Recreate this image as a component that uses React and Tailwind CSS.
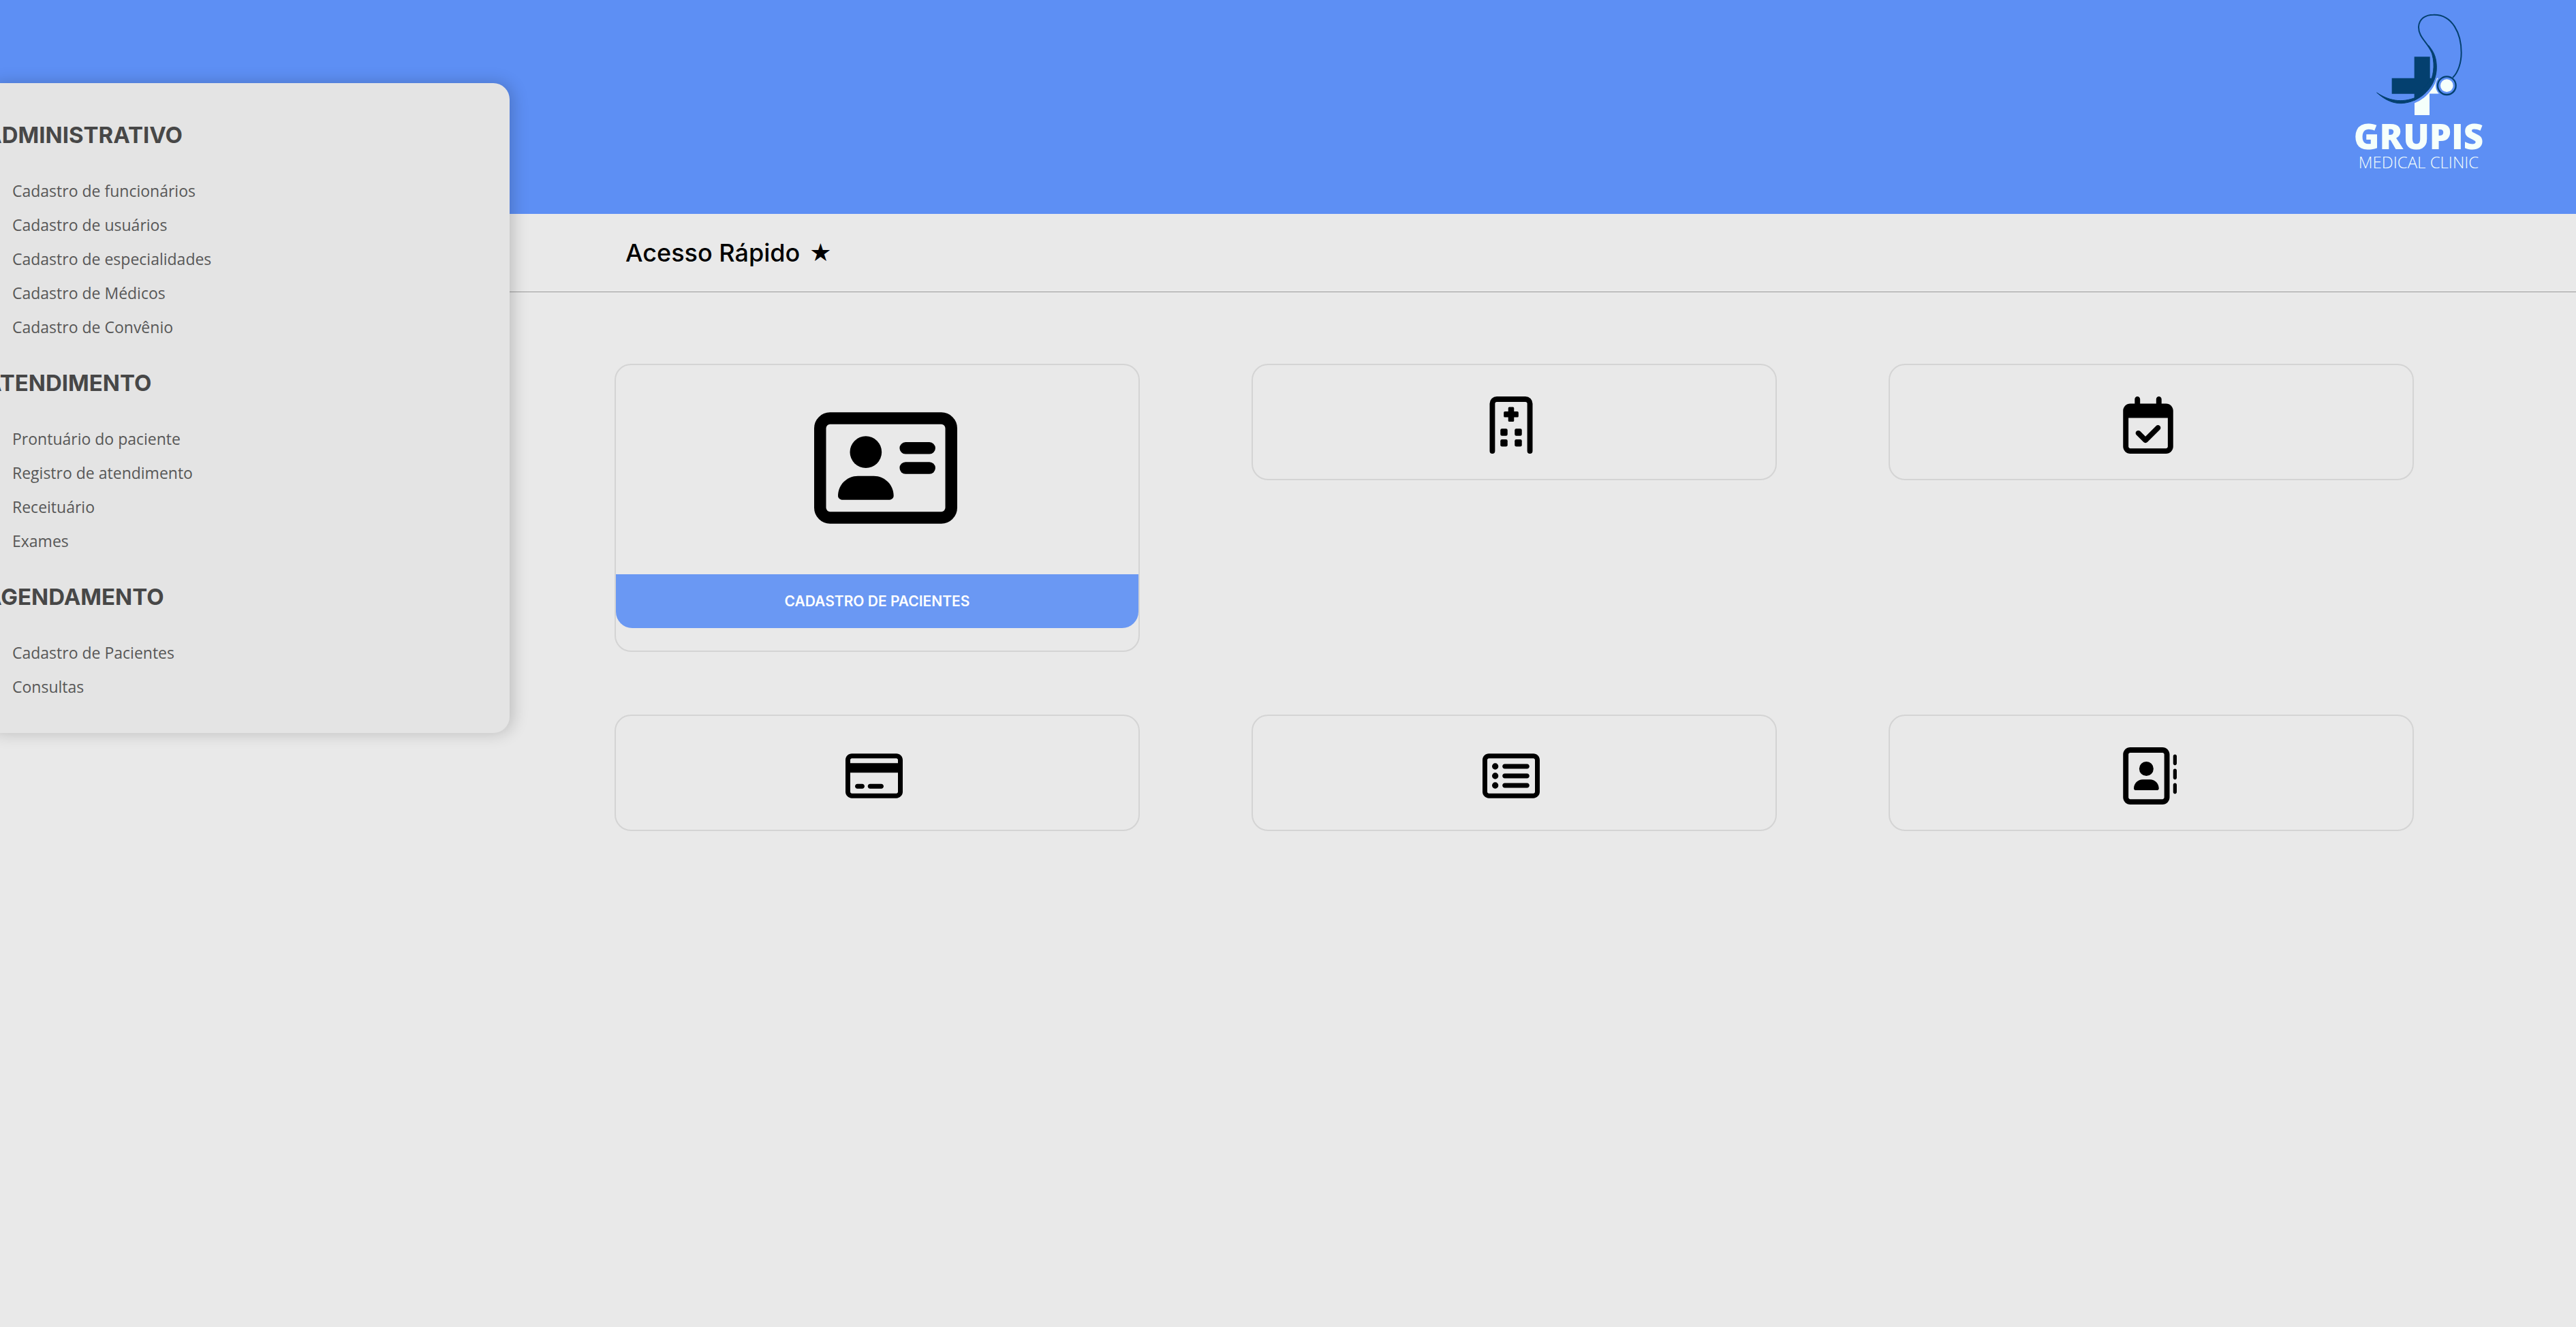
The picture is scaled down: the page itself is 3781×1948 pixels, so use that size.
import React from "react";
import {
  FaRegAddressBook,
  FaRegCalendarCheck,
  FaRegCreditCard,
  FaRegRectangleList,
} from "react-icons/fa6";

const menu = [
  {
    title: "ADMINISTRATIVO",
    items: [
      "Cadastro de funcionários",
      "Cadastro de usuários",
      "Cadastro de especialidades",
      "Cadastro de Médicos",
      "Cadastro de Convênio",
    ],
  },
  {
    title: "ATENDIMENTO",
    items: ["Prontuário do paciente", "Registro de atendimento", "Receituário", "Exames"],
  },
  {
    title: "AGENDAMENTO",
    items: ["Cadastro de Pacientes", "Consultas"],
  },
];

function PatientCardIcon({ size }) {
  return (
    <svg width={size} height={size} viewBox="0 0 576 512" fill="currentColor" aria-hidden="true">
      <rect
        x="24"
        y="56"
        width="528"
        height="400"
        rx="40"
        fill="none"
        stroke="currentColor"
        strokeWidth="48"
      />
      <circle cx="208" cy="192" r="64" />
      <path d="M176 288h64c44.2 0 80 35.8 80 80c0 8.8-7.2 16-16 16H112c-8.8 0-16-7.2-16-16c0-44.2 35.8-80 80-80z" />
      <rect x="344" y="152" width="144" height="48" rx="24" />
      <rect x="344" y="232" width="144" height="48" rx="24" />
    </svg>
  );
}

function HospitalIcon({ size }) {
  return (
    <svg width={size} height={size} viewBox="0 0 384 512" aria-hidden="true">
      <path
        d="M24 488V64a40 40 0 0 1 40-40H320a40 40 0 0 1 40 40V488"
        fill="none"
        stroke="currentColor"
        strokeWidth="48"
        strokeLinecap="round"
      />
      <rect x="166" y="94" width="52" height="132" rx="10" fill="currentColor" />
      <rect x="126" y="134" width="132" height="52" rx="10" fill="currentColor" />
      <rect x="96" y="288" width="64" height="64" rx="14" fill="currentColor" />
      <rect x="224" y="288" width="64" height="64" rx="14" fill="currentColor" />
      <rect x="96" y="384" width="64" height="64" rx="14" fill="currentColor" />
      <rect x="224" y="384" width="64" height="64" rx="14" fill="currentColor" />
    </svg>
  );
}

const shortcuts = [
  { label: "Hospital", Icon: HospitalIcon },
  { label: "Consultas", Icon: FaRegCalendarCheck },
  { label: "Convênio", Icon: FaRegCreditCard },
  { label: "Registro de atendimento", Icon: FaRegRectangleList },
  { label: "Contatos", Icon: FaRegAddressBook },
];

function Logo() {
  return (
    <a
      href="#inicio"
      className="flex w-60 flex-col items-center font-['Open_Sans',sans-serif] text-[#f5fffb]"
    >
      <svg viewBox="0 0 720 516" className="h-[172px] w-60" aria-hidden="true">
        <rect x="342" y="344" width="66" height="163" fill="#f5fffb" />
        <path d="M400 344H446V412H400Z" fill="#f5fffb" />
        <circle cx="484" cy="377" r="49" fill="#5d8ff4" />
        <path d="M436 400Q440 408 452 412H400V400Z" fill="#f5fffb" />
        <path
          d="M176 408C215 443 262 456 300 454C378 448 438 378 438 298C438 250 426 228 404 200L416 235C432 280 428 310 418 344L341 430C285 456 225 442 176 408Z"
          fill="#5d8ff4"
          stroke="#5d8ff4"
          strokeWidth="18"
        />
        <path
          d="M341 250H410V344H428Q410 400 341 444V413H242V344H341Z"
          fill="#04406f"
        />
        <path
          d="M176 408C215 443 250 456 285 455C372 450 439 378 439 298C439 250 426 228 404 200C432 254 430 305 418 344L350 428C285 456 225 442 176 408Z"
          fill="#04406f"
          stroke="#04406f"
          strokeWidth="3"
          strokeLinejoin="round"
        />
        <path
          d="M418 230C398 185 359 164 360 118C362 84 388 65 425 65C510 62 548 150 548 232C548 275 535 318 510 342"
          fill="none"
          stroke="#04406f"
          strokeWidth="6"
        />
        <circle cx="484" cy="377" r="40" fill="none" stroke="#04406f" strokeWidth="7" />
        <circle cx="484" cy="377" r="28" fill="#f5fffb" />
      </svg>
      <span className="text-[51px] leading-[54px] font-extrabold">GRUPIS</span>
      <span className="text-2xl leading-6 font-light">MEDICAL CLINIC</span>
    </a>
  );
}

function SideMenu() {
  return (
    <nav
      aria-label="Menu principal"
      className="absolute top-[122px] -left-[22px] flex w-[770px] flex-col gap-8 rounded-3xl bg-[#e4e4e4] pt-[51px] pb-[43px] shadow-[4px_0_24px_rgba(0,0,0,0.2)]"
    >
      {menu.map((group) => (
        <section key={group.title} className="flex flex-col gap-8">
          <h2 className="text-[33px] leading-[50px] font-bold text-[#474747]">{group.title}</h2>
          <ul className="pl-10 font-['Open_Sans',sans-serif]">
            {group.items.map((item) => (
              <li key={item} className="text-[23px] leading-[50px] text-[#575757]">
                <a href="#menu">{item}</a>
              </li>
            ))}
          </ul>
        </section>
      ))}
    </nav>
  );
}

export default function App() {
  return (
    <div className="relative min-h-screen overflow-hidden bg-[#e9e9e9] font-['Inter',sans-serif] text-black">
      <header className="flex h-[314px] items-start justify-end bg-[#5d8ff4] pr-[111px]">
        <Logo />
      </header>
      <div className="border-b border-[#999999] py-8 pl-[918px]">
        <h1 className="flex gap-3.5 text-4xl leading-[50px] font-medium">
          Acesso Rápido
          <span className="font-['DejaVu_Sans',sans-serif]">★</span>
        </h1>
      </div>
      <main className="grid grid-cols-3 items-start gap-x-[164px] gap-y-[92px] pt-[105px] pr-[238px] pl-[902px]">
        <button
          type="button"
          className="flex flex-col rounded-3xl border-2 border-[#d4d4d4] pb-[33px]"
        >
          <span className="flex h-[307px] w-full items-center justify-center pb-1.5 pl-6">
            <PatientCardIcon size={210} />
          </span>
          <span className="w-full rounded-b-3xl bg-[#6a98f3] text-[21px] leading-[79px] font-semibold text-white">
            CADASTRO DE PACIENTES
          </span>
        </button>
        {shortcuts.map(({ label, Icon }) => (
          <button
            key={label}
            type="button"
            aria-label={label}
            className="flex h-[171px] items-center justify-center rounded-3xl border-2 border-[#d4d4d4] pt-2 pr-2.5"
          >
            <Icon size={84} aria-hidden="true" />
          </button>
        ))}
      </main>
      <SideMenu />
    </div>
  );
}
